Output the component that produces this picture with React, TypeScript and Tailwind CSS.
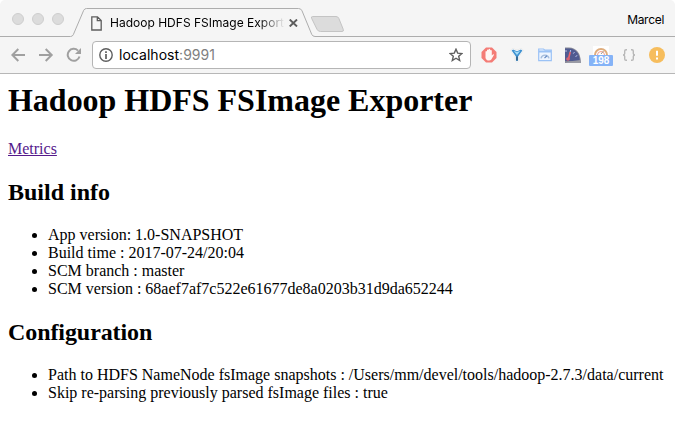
import React from "react";

function TabStrip() {
  return (
    <header className="relative flex h-[37px] items-start rounded-t-[5px] bg-[#f5f5f5] font-['Inter','Liberation_Sans',sans-serif]">
      <svg className="absolute inset-0" width="675" height="37" fill="none">
        <path d="M0 36.5H70.5Q72.5 36.5 73.3 34.7L83.7 10.3Q84.6 8.5 86.6 8.5H298.5Q301 8.5 302 10.8L311.7 34.3Q312.6 36.5 315 36.5H675" stroke="#adadad" />
        <path d="M312.5 16.5H336Q338 16.5 338.8 18.3L343.3 29.5Q344 31.5 342 31.5H320.5Q318 31.5 317 29.3L311.6 18.3Q311 16.5 312.5 16.5Z" fill="#dcdcdc" stroke="#c4c4c4" />
      </svg>
      <div className="relative ml-3 mt-[13px] flex gap-2">
        {[0, 1, 2].map((i) => (
          <span key={i} className="size-3 rounded-full border border-[#cecece] bg-[#dcdcdc]" />
        ))}
      </div>
      <div className="relative ml-[27px] mt-[15px] flex h-4 w-[210px] items-center">
        <svg width="11" height="15" viewBox="0 0 11 15" fill="none" stroke="#5d5d5d" strokeWidth="1.3">
          <path d="M.8.8H6.5L10.2 4.5V14H.8ZM6.3.8V4.7H10.2" />
        </svg>
        <span className="ml-2 w-[175px] overflow-hidden whitespace-nowrap bg-gradient-to-r from-black from-85% to-transparent bg-clip-text text-[12px] leading-4 tracking-[0.01px] text-transparent">
          Hadoop HDFS FSImage Exporter
        </span>
        <svg className="ml-[4px] shrink-0" width="9" height="8" stroke="#5d5d5d" strokeWidth="1.9">
          <path d="M.7.5L8 7.5M8 .5L.7 7.5" />
        </svg>
      </div>
      <span className="relative ml-auto mr-[11px] mt-3 text-[12px] leading-4 tracking-[-0.3px] text-black">Marcel</span>
    </header>
  );
}

function Extensions() {
  return (
    <div className="ml-[10px] flex items-center">
      <svg width="16" height="16" viewBox="0 0 16 16">
        <path d="M5 .5H11L15.5 5V11L11 15.5H5L.5 11V5Z" fill="#f47c76" />
        <path d="M4.5 7.5V4.5Q5.3 3.6 6 4.5V3Q6.8 2 7.6 3V2.3Q8.5 1.4 9.2 2.4V3.3Q10.2 2.5 10.8 3.5V8.5L12.2 7.2Q13.4 7 12.8 8.2L10.3 12.5Q9.5 13.5 8 13.5Q5 13.5 4.5 10.7Z" fill="#fff6f4" />
      </svg>
      <svg className="ml-3" width="16" height="16" viewBox="0 0 16 16">
        <path d="M1.5 3.2L3.5 1.5 8 3 12.5 1.5 14.5 3.2 10 9.7V13.7L8 15.5 6 13.7V9.7Z" fill="#fff" stroke="#e5e5e5" strokeWidth=".7" />
        <path d="M2.6 3.5L4 2.6 8 4.2 12 2.6 13.4 3.5 9.1 9.4V13.2L8 14.2 6.9 13.2V9.4Z" fill="#3f91d0" />
        <path d="M4.8 4L8 5 11.2 4 8 8Z" fill="#a5dcf7" />
        <path d="M7 9.5H9V13L8 14 7 13Z" fill="#366b96" />
      </svg>
      <svg className="ml-3" width="16" height="16" viewBox="0 0 16 16" fill="none">
        <path d="M1.7 2H6.5L8 3.2H14.3V13.7H1.7Z" fill="#eef5ff" stroke="#9bc2f5" strokeWidth="1.2" />
        <path d="M2 4.5H14" stroke="#9bc2f5" strokeWidth="2" />
        <path d="M4 11.3A4.1 4.1 0 0112 11.3" stroke="#a5bddd" strokeWidth="1.4" />
        <path d="M7.5 11L10 8.8" stroke="#648ac3" strokeWidth="1.2" />
      </svg>
      <svg className="ml-3" width="16" height="16" viewBox="0 0 16 16" fill="none">
        <path d="M0 .5H4Q15.5 1 16 16H0Z" fill="#858797" />
        <path d="M0 1.5H4Q14 2 14.8 14H0Z" fill="#505b91" />
        <path d="M1 3V5M5.7 3L5.2 5M9.5 5L8.3 6.6M12.3 8.5L10.5 9.5" stroke="#b9c4eb" />
        <path d="M5.2 5L3.4 12.5" stroke="#ef646c" strokeWidth="1.6" />
        <circle cx="3" cy="12" r="1.8" fill="#d96370" />
        <path d="M4 14.5L15 13 16 16H0" fill="#9a9ba5" />
      </svg>
      <div className="relative ml-2 h-[22px] w-6">
        <svg className="absolute left-1 top-[2px]" width="16" height="16" fill="none">
          <path d="M0 0H16V12H0Z" fill="#fff" />
          <path d="M2 9A6 6 0 0114 9" stroke="#dfad7d" strokeWidth="2" />
          <path d="M4.5 9A3.5 3.5 0 0111.5 9" stroke="#f18770" strokeWidth=".8" />
          <path d="M8 8L10.5 5" stroke="#a49a8e" />
        </svg>
        <span className="absolute bottom-0 h-[11px] w-6 rounded-[1px] bg-[#85b3f7] text-center font-['Liberation_Sans',sans-serif] text-[10px] font-bold leading-[11px] text-white">198</span>
      </div>
      <svg className="ml-[8px]" width="16" height="16" viewBox="0 0 16 16" fill="none" stroke="#b8b8b8" strokeWidth="1.4">
        <path d="M6 2.7H5Q3.7 2.7 3.7 4V6.5Q3.7 8 2 8Q3.7 8 3.7 9.5V12Q3.7 13.3 5 13.3H6M10 2.7H11Q12.3 2.7 12.3 4V6.5Q12.3 8 14 8Q12.3 8 12.3 9.5V12Q12.3 13.3 11 13.3H10" />
      </svg>
      <svg className="ml-3" width="16" height="16">
        <circle cx="8" cy="8" r="8" fill="#f6bd5d" />
        <path d="M8 3.8V8.7M8 10.6V12.4" stroke="#fff" strokeWidth="2" />
      </svg>
    </div>
  );
}

function Toolbar() {
  return (
    <div className="flex h-[37px] items-center border-b border-[#b7b7b7] bg-[#f5f5f5] pl-[11px] font-['Inter','Liberation_Sans',sans-serif]">
      <svg width="72" height="16" fill="none" stroke="#a0a0a0" strokeWidth="2">
        <path d="M14 8H1.5M7.3 2L1.3 8 7.3 14M28 8H40.5M34.7 2L40.7 8 34.7 14M67 3.6A6 6 0 1068.5 9.5" />
        <path d="M70 1V7H64Z" fill="#a0a0a0" stroke="none" />
      </svg>
      <div className="ml-[9px] flex h-7 w-[379px] items-center rounded-[4px] border border-[#b5b5b5] bg-white pl-[6px] pr-[7px]">
        <svg width="14" height="14" fill="none" stroke="#5e5e5e">
          <circle cx="7" cy="7" r="6.2" strokeWidth="1.4" />
          <path d="M7 6V11M7 3.3V5" strokeWidth="1.7" />
        </svg>
        <span className="ml-[6px] text-[14px] leading-5 tracking-[0.03px] text-black">localhost<span className="text-[#808080]">:9991</span></span>
        <svg className="ml-auto" width="14" height="14" viewBox="0 0 14 14" fill="none" stroke="#5e5e5e" strokeWidth="1.4">
          <path d="M7 1.2L8.7 5.1 13 5.5 9.7 8.3 10.7 12.5 7 10.2 3.3 12.5 4.3 8.3 1 5.5 5.3 5.1Z" />
        </svg>
      </div>
      <Extensions />
    </div>
  );
}

export default function App() {
  return (
    <div className="h-[424px] w-[675px] overflow-hidden bg-white">
      <TabStrip />
      <Toolbar />
      <main className="px-2 pt-2 font-['Liberation_Serif',serif] text-[16px] leading-[18px] text-black">
        <h1 className="text-[32px] font-bold leading-[37px] tracking-[-0.02px]">Hadoop HDFS FSImage Exporter</h1>
        <a className="mt-[21px] block w-fit text-[#551a8b] underline" href="#">Metrics</a>
        <h2 className="mt-5 text-[24px] font-bold leading-7">Build info</h2>
        <ul className="mt-5 list-disc pl-10">
          <li>App version: 1.0-SNAPSHOT</li>
          <li>Build time : 2017-07-24/20:04</li>
          <li>SCM branch : master</li>
          <li>SCM version : 68aef7af7c522e61677de8a0203b31d9da652244</li>
        </ul>
        <h2 className="mt-5 text-[24px] font-bold leading-7 tracking-[-0.08px]">Configuration</h2>
        <ul className="mt-5 list-disc whitespace-nowrap pl-10">
          <li>Path to HDFS NameNode fsImage snapshots : /Users/mm/devel/tools/hadoop-2.7.3/data/current</li>
          <li>Skip re-parsing previously parsed fsImage files : true</li>
        </ul>
      </main>
    </div>
  );
}
